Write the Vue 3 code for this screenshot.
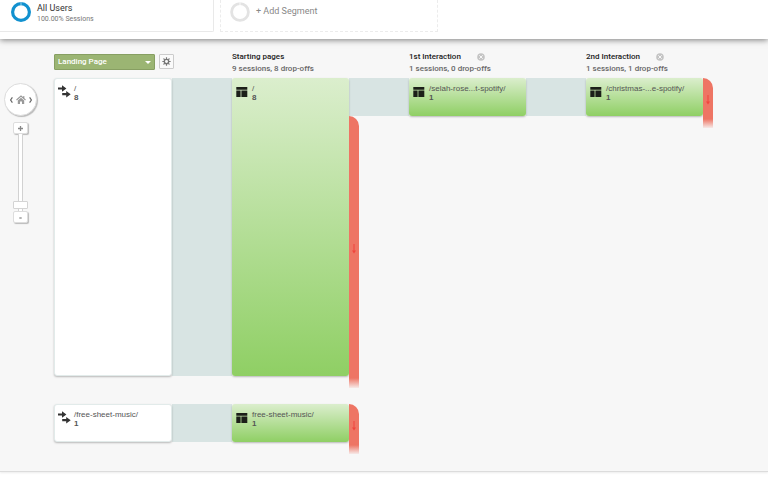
<script setup>
import { ref } from 'vue'

const dimension = ref('Landing Page')
const zoomLevel = ref(1)

const steps = [
  { title: 'Starting pages', summary: '9 sessions, 8 drop-offs', removable: false },
  { title: '1st Interaction', summary: '1 sessions, 0 drop-offs', removable: true },
  { title: '2nd Interaction', summary: '1 sessions, 1 drop-offs', removable: true }
]

const flows = [
  {
    size: 'large',
    source: { label: '/', count: 8 },
    pages: [
      { label: '/', count: 8, size: 'large', drop: 'tall' },
      { label: '/selah-rose...t-spotify/', count: 1, size: 'small', drop: '' },
      { label: '/christmas-...e-spotify/', count: 1, size: 'small', drop: 'short' }
    ]
  },
  {
    size: 'small',
    source: { label: '/free-sheet-music/', count: 1 },
    pages: [{ label: 'free-sheet-music/', count: 1, size: 'small', drop: 'short' }]
  }
]
</script>

<template>
  <div class="report">
    <header class="segments">
      <button class="segment active" type="button">
        <svg class="ring" viewBox="0 0 20 20" aria-hidden="true">
          <circle cx="10" cy="10" r="8.4" fill="none" stroke="#1291cf" stroke-width="3.2" />
          <path d="M10 0v3.2" stroke="#b9dff0" stroke-width="0.8" />
        </svg>
        <span class="segment-text">
          <span class="segment-name">All Users</span>
          <span class="segment-share">100.00% Sessions</span>
        </span>
      </button>
      <button class="segment add" type="button">
        <svg class="ring" viewBox="0 0 20 20" aria-hidden="true">
          <circle cx="10" cy="10" r="8.4" fill="none" stroke="#e3e3e3" stroke-width="2.8" />
          <path d="M10 0v3.2" stroke="#fff" stroke-width="0.8" />
        </svg>
        <span class="add-label">+ Add Segment</span>
      </button>
    </header>

    <main class="workspace">
      <nav class="controls" aria-label="Flow navigation">
        <div class="pan">
          <button type="button" aria-label="Pan left">
            <svg width="5" height="8" viewBox="0 0 5 8"><path d="M3.400 1.400 1.600 4l1.800 2.600" fill="none" stroke="#666" stroke-width="1.2" /></svg>
          </button>
          <button type="button" aria-label="Home">
            <svg width="10" height="10" viewBox="0 0 10 10">
              <path d="M.5 5 5 1l4.500 4M7.800 1v2" fill="none" stroke="#999" stroke-width="1.1" />
              <path d="M1.800 5.500 5 2.800l3.200 2.700V9H6V6.400H4V9H1.800z" fill="#999" />
            </svg>
          </button>
          <button type="button" aria-label="Pan right">
            <svg width="5" height="8" viewBox="0 0 5 8"><path d="m1.600 1.400 1.800 2.600-1.800 2.600" fill="none" stroke="#666" stroke-width="1.2" /></svg>
          </button>
        </div>
        <button class="zoom" type="button" aria-label="Zoom in">
          <svg width="7" height="7" viewBox="0 0 7 7"><path d="M1 3.500h5M3.500 1v5" stroke="#888" stroke-width="1.300" /></svg>
        </button>
        <input v-model="zoomLevel" class="slider" type="range" min="0" max="35" aria-label="Zoom level" />
        <button class="zoom" type="button" aria-label="Zoom out">
          <svg width="7" height="7" viewBox="0 0 7 7"><path d="M2.300 4h2.400" stroke="#777" stroke-width="1.100" /></svg>
        </button>
      </nav>

      <section class="diagram">
        <div class="headings">
          <div class="picker">
            <span class="select-wrap">
              <select v-model="dimension" aria-label="Dimension">
                <option>Landing Page</option>
              </select>
              <i class="caret"></i>
            </span>
            <button class="gear" type="button" aria-label="Settings">
              <svg width="9" height="9" viewBox="0 0 10 10">
                <circle cx="5" cy="5" r="2.400" fill="none" stroke="#777" stroke-width="1.500" />
                <path d="M5 .4v2M5 7.600v2M.4 5h2M7.600 5h2M1.700 1.700l1.400 1.400M6.900 6.900l1.400 1.400M8.300 1.700 6.900 3.100M3.100 6.900 1.700 8.300" stroke="#777" stroke-width="1.300" />
              </svg>
            </button>
          </div>
          <div v-for="step in steps" :key="step.title" class="step">
            <div class="step-head">
              <h2>{{ step.title }}</h2>
              <button v-if="step.removable" class="remove" type="button" :aria-label="'Remove ' + step.title">
                <svg width="8" height="8" viewBox="0 0 8 8">
                  <circle cx="4" cy="4" r="3.800" fill="#c4c4c4" />
                  <path d="m2.300 2.300 3.400 3.400M5.700 2.300 2.300 5.700" stroke="#f7f7f7" stroke-width="1" />
                </svg>
              </button>
            </div>
            <p>{{ step.summary }}</p>
          </div>
        </div>

        <div v-for="flow in flows" :key="flow.source.label" class="flow">
          <article class="node source" :class="flow.size">
            <svg class="node-icon" width="13" height="13" viewBox="0 0 13 13" aria-hidden="true">
              <path d="M0 2.400h4V.2L8.400 3.500 4 6.800V4.600H0zM4.200 8.100h4V5.900l4.500 3.300-4.500 3.300v-2.200h-4z" fill="#333" />
            </svg>
            <div class="node-text">
              <span class="path">{{ flow.source.label }}</span>
              <strong>{{ flow.source.count }}</strong>
            </div>
          </article>
          <template v-for="(page, i) in flow.pages" :key="i">
            <div class="link" :class="page.size"></div>
            <div class="stop">
              <article class="node page" :class="page.size">
                <svg class="node-icon" width="12" height="13" viewBox="0 0 12 13" aria-hidden="true">
                  <path d="M.3 2h11v2.800H.3zM.3 5.500h4.300V12H.3zM5.400 5.500h5.900V12H5.400z" fill="#1c1f19" />
                </svg>
                <div class="node-text">
                  <span class="path">{{ page.label }}</span>
                  <strong>{{ page.count }}</strong>
                </div>
              </article>
              <div v-if="page.drop" class="drop" :class="page.drop">
                <svg width="6" height="10" viewBox="0 0 6 10" aria-hidden="true">
                  <path d="M2.500 0h1v6.500h1.500L3 9.500 1 6.500h1.500z" fill="#f0453d" />
                </svg>
              </div>
            </div>
          </template>
        </div>
      </section>
    </main>
  </div>
</template>

<style>
body {
  margin: 0;
  background: #fff;
}
</style>

<style scoped>
.report {
  overflow: hidden;
  padding-bottom: 8px;
  font-family: Roboto, "Liberation Sans", sans-serif;
  color: #333;
}

button {
  margin: 0;
  padding: 0;
  border: 0;
  background: none;
  font-family: inherit;
  color: inherit;
}

svg {
  display: block;
}

.segments {
  position: relative;
  display: flex;
  gap: 6px;
  padding-bottom: 7px;
  background: #fff;
  box-shadow: 0 1px 6px rgba(0, 0, 0, 0.5);
}

.segment {
  box-sizing: border-box;
  display: flex;
  align-items: flex-start;
  gap: 6px;
  height: 32px;
  padding-top: 2px;
  text-align: left;
}

.active {
  width: 214px;
  padding-left: 11px;
  border-right: 1px solid #e9e9e9;
  border-bottom: 1px solid #e9e9e9;
  border-bottom-right-radius: 2px;
}

.add {
  width: 218px;
  padding-left: 9px;
  border: 1px dashed #ececec;
  border-top: 0;
}

.ring {
  width: 20px;
  height: 20px;
}

.segment-text {
  display: flex;
  flex-direction: column;
}

.segment-name {
  font-size: 9px;
  line-height: 12px;
}

.segment-share {
  font-size: 7px;
  line-height: 10px;
  color: #777;
}

.add-label {
  font-size: 9px;
  line-height: 18px;
  color: #888;
}

.workspace {
  display: flex;
  gap: 17px;
  padding: 14px 0 29px 4px;
  background: #f7f7f7;
  border-bottom: 1px solid #dcdcdc;
  box-shadow: 0 1px 2px rgba(0, 0, 0, 0.08);
}

.controls {
  flex: none;
  display: flex;
  flex-direction: column;
  align-items: center;
  width: 33px;
  padding-top: 30px;
}

.pan {
  box-sizing: border-box;
  display: flex;
  align-items: center;
  justify-content: center;
  gap: 2px;
  width: 33px;
  height: 33px;
  margin-bottom: 6px;
  border: 1px solid #ddd;
  border-radius: 50%;
  background: #fff;
  box-shadow: 1px 1px 1px rgba(0, 0, 0, 0.25);
}

.zoom {
  box-sizing: border-box;
  display: flex;
  align-items: center;
  justify-content: center;
  width: 15px;
  height: 12px;
  border: 1px solid #ddd;
  border-radius: 2px;
  background: #fff;
  box-shadow: 1px 1px 1px rgba(0, 0, 0, 0.25);
}

.slider {
  appearance: none;
  writing-mode: vertical-lr;
  direction: rtl;
  width: 15px;
  height: 77px;
  margin: 0;
  background: none;
}

.slider::-webkit-slider-runnable-track {
  box-sizing: border-box;
  width: 5px;
  height: 77px;
  border: 1px solid #d2d2d2;
  border-width: 0 1px;
  background: #fff;
}

.slider::-webkit-slider-thumb {
  appearance: none;
  box-sizing: border-box;
  width: 15px;
  height: 8px;
  margin-left: -6px;
  border: 1px solid #d4d4d4;
  border-radius: 1px;
  background: #fff;
}

.diagram {
  flex: 1;
  min-width: 0;
}

.headings {
  display: flex;
  height: 25px;
}

.picker {
  display: flex;
  align-items: flex-start;
  gap: 4px;
  width: 178px;
  padding-top: 1px;
}

.select-wrap {
  display: grid;
  align-items: center;
  width: 101px;
  height: 16px;
}

.select-wrap > * {
  grid-area: 1 / 1;
}

select {
  appearance: none;
  box-sizing: border-box;
  width: 100%;
  height: 16px;
  padding: 0 3px;
  border: 1px solid #879f62;
  border-radius: 1px;
  background: #9bb573;
  font: 500 8px/12px Roboto, sans-serif;
  color: #fff;
}

.caret {
  justify-self: end;
  margin-right: 4px;
  border: 3px solid transparent;
  border-top-color: #fff;
  border-bottom: 0;
  pointer-events: none;
}

.gear {
  box-sizing: border-box;
  display: flex;
  align-items: center;
  justify-content: center;
  width: 15px;
  height: 15px;
  border: 1px solid #ccc;
  border-radius: 1px;
  background: #fafafa;
}

.step {
  width: 177px;
}

.step-head {
  display: flex;
  align-items: center;
  gap: 16px;
  height: 8px;
}

h2,
p {
  margin: 0;
  font-size: 8px;
  font-weight: 500;
}

h2 {
  line-height: 8px;
  color: #222;
}

p {
  padding-top: 2px;
  line-height: 11px;
  color: #666;
}

.flow {
  display: flex;
  align-items: flex-start;
}

.flow + .flow {
  margin-top: 28px;
}

.node {
  position: relative;
  box-sizing: border-box;
  display: flex;
  gap: 4px;
  padding: 6px 4px;
  border-radius: 3px;
  box-shadow: 0 1px 2px rgba(0, 0, 0, 0.25);
  font: 8px/9px "Liberation Sans", sans-serif;
}

.large {
  height: 298px;
}

.small {
  height: 38px;
}

.source {
  flex: none;
  gap: 3px;
  width: 118px;
  border: 1px solid #e2ebea;
  padding: 5px 3px;
  background: #fff;
}

.page {
  width: 117px;
  background: linear-gradient(#dbeecd, #8fcf64);
}

.node-icon {
  flex: none;
  margin-top: 1px;
}

.node-text {
  display: flex;
  flex-direction: column;
  color: #555;
}

.path {
  white-space: nowrap;
}

.link {
  flex: none;
  width: 60px;
  background: #d8e4e3;
}

.stop {
  position: relative;
  flex: none;
  width: 117px;
}

.drop {
  position: absolute;
  z-index: 1;
  left: 100%;
  box-sizing: border-box;
  display: flex;
  justify-content: center;
  align-items: center;
  width: 10px;
  padding-bottom: 6px;
  border-top-right-radius: 10px;
}

.tall {
  top: 38px;
  height: 272px;
  background: linear-gradient(#ee7564 262px, rgba(238, 117, 100, 0.1));
}

.short {
  top: 0;
  height: 50px;
  background: linear-gradient(#ee7564 41px, rgba(238, 117, 100, 0.1));
}
</style>
